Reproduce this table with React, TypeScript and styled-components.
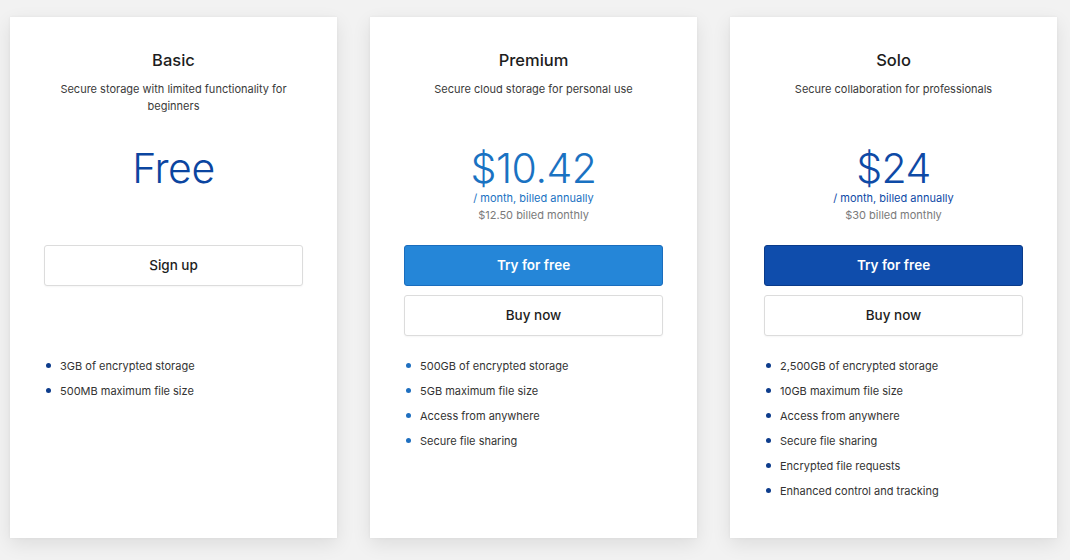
import React from "react";
import styled, { createGlobalStyle } from "styled-components";

const Global = createGlobalStyle`
  html, body { margin: 0; padding: 0; background: #f2f2f2; }
  body { font-family: Inter, "Noto Sans", Arial, sans-serif; -webkit-font-smoothing: antialiased; }
  * { box-sizing: border-box; }
`;

const Page = styled.div`
  display: flex;
  gap: 33px;
  padding: 17px 10px 22px;
  align-items: stretch;
  width: 1070px;
  height: 560px;
  overflow: hidden;
`;

const Card = styled.div`
  width: 327px;
  height: 521px;
  flex: none;
  background: #fff;
  box-shadow: 0 6px 18px rgba(0, 0, 0, 0.09), 0 0 3px rgba(0, 0, 0, 0.05);
  padding: 32px 34px;
  display: flex;
  flex-direction: column;
  align-items: stretch;
`;

const Title = styled.h2`
  margin: 0;
  font-size: 16.5px;
  line-height: 22px;
  font-weight: 500;
  color: #1d1d1d;
  text-align: center;
`;

const Desc = styled.p`
  margin: 10px 0 0;
  height: 34px;
  font-size: 11px;
  line-height: 17px;
  color: #3a3a3a;
  text-align: center;
`;

const PriceBlock = styled.div`
  margin-top: 31px;
  height: 78px;
  display: flex;
  flex-direction: column;
  align-items: center;
`;

const Price = styled.div<{ $color: string }>`
  font-size: 41px;
  line-height: 44px;
  font-weight: 300;
  letter-spacing: -0.5px;
  color: ${(p) => p.$color};
`;

const Billing = styled.div<{ $color: string }>`
  font-size: 11px;
  line-height: 17px;
  color: ${(p) => p.$color};
`;

const Monthly = styled.div`
  font-size: 11px;
  line-height: 17px;
  color: #7a7a7a;
`;

const Buttons = styled.div`
  margin-top: 21px;
  display: flex;
  flex-direction: column;
  gap: 9px;
  height: 91px;
`;

const Button = styled.button<{ $bg?: string; $border?: string }>`
  height: 41px;
  width: 100%;
  border-radius: 3px;
  font-family: inherit;
  font-size: 13.5px;
  line-height: 1;
  padding: 0;
  cursor: pointer;
  ${(p) =>
    p.$bg
      ? `background: ${p.$bg}; border: 1px solid ${p.$border}; color: #fff; font-weight: 600;`
      : `background: #fff; border: 1px solid #dcdcdc; color: #1d1d1d; font-weight: 500; box-shadow: 0 1px 2px rgba(0,0,0,0.04);`}
`;

const Features = styled.ul`
  margin: 17px 0 0;
  padding: 0;
  list-style: none;
`;

const Feature = styled.li<{ $dot: string }>`
  display: flex;
  align-items: center;
  gap: 9px;
  height: 25px;
  padding-left: 2px;
  font-size: 11px;
  color: #333;
  &::before {
    content: "";
    width: 5px;
    height: 5px;
    border-radius: 50%;
    background: ${(p) => p.$dot};
    flex: none;
  }
`;

type Plan = {
  title: string;
  desc: string;
  price: string;
  color: string;
  billing?: string;
  monthly?: string;
  primary?: { bg: string; border: string; label: string };
  secondary: string;
  dot: string;
  features: string[];
};

const plans: Plan[] = [
  {
    title: "Basic",
    desc: "Secure storage with limited functionality for beginners",
    price: "Free",
    color: "#0b45a0",
    secondary: "Sign up",
    dot: "#0d3c8c",
    features: ["3GB of encrypted storage", "500MB maximum file size"],
  },
  {
    title: "Premium",
    desc: "Secure cloud storage for personal use",
    price: "$10.42",
    color: "#1a72c2",
    billing: "/ month, billed annually",
    monthly: "$12.50 billed monthly",
    primary: { bg: "#2586d8", border: "#1a6dbd", label: "Try for free" },
    secondary: "Buy now",
    dot: "#1e6fc0",
    features: [
      "500GB of encrypted storage",
      "5GB maximum file size",
      "Access from anywhere",
      "Secure file sharing",
    ],
  },
  {
    title: "Solo",
    desc: "Secure collaboration for professionals",
    price: "$24",
    color: "#0e4aa6",
    billing: "/ month, billed annually",
    monthly: "$30 billed monthly",
    primary: { bg: "#0f4dac", border: "#0a3b8a", label: "Try for free" },
    secondary: "Buy now",
    dot: "#0d3c8c",
    features: [
      "2,500GB of encrypted storage",
      "10GB maximum file size",
      "Access from anywhere",
      "Secure file sharing",
      "Encrypted file requests",
      "Enhanced control and tracking",
    ],
  },
];

export default function App() {
  return (
    <>
      <Global />
      <Page>
        {plans.map((p) => (
          <Card key={p.title}>
            <Title>{p.title}</Title>
            <Desc>{p.desc}</Desc>
            <PriceBlock>
              <Price $color={p.color}>{p.price}</Price>
              {p.billing && <Billing $color={p.color}>{p.billing}</Billing>}
              {p.monthly && <Monthly>{p.monthly}</Monthly>}
            </PriceBlock>
            <Buttons>
              {p.primary && (
                <Button $bg={p.primary.bg} $border={p.primary.border}>
                  {p.primary.label}
                </Button>
              )}
              <Button>{p.secondary}</Button>
            </Buttons>
            <Features>
              {p.features.map((f) => (
                <Feature key={f} $dot={p.dot}>
                  {f}
                </Feature>
              ))}
            </Features>
          </Card>
        ))}
      </Page>
    </>
  );
}
